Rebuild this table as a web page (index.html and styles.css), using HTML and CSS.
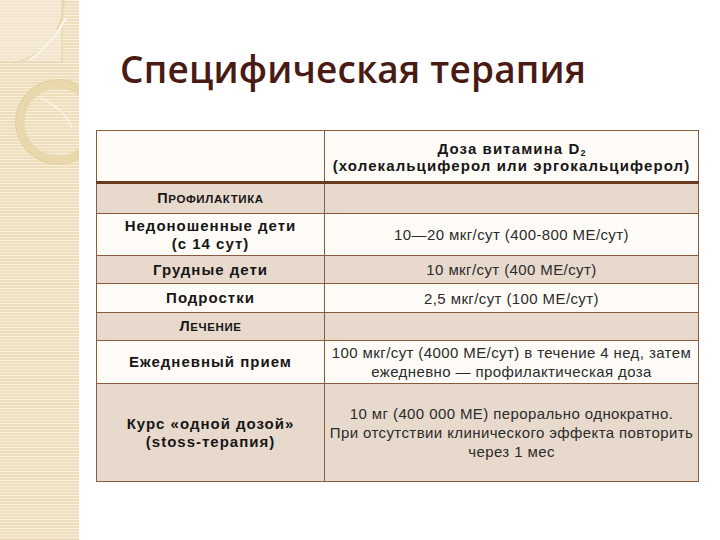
FILE: index.html
```html
<!DOCTYPE html>
<html lang="ru">
<head>
<meta charset="utf-8">
<link rel="stylesheet" href="styles.css">
</head>
<body>
<div class="page">
  <aside class="strip">
    <svg class="deco" width="79" height="540" viewBox="0 0 79 540">
      <rect x="0" y="0" width="62" height="62" fill="#f6ecdc" opacity="0.55"/>
      <path d="M0 62 H62 V0" fill="none" stroke="#e3d2ae" stroke-width="1"/>
      <path d="M64 0 C62 32 48 54 14 63" fill="none" stroke="#e6d6b2" stroke-width="1.5"/>
      <path d="M66 18 C58 34 46 48 30 60" fill="none" stroke="#fbf5e8" stroke-width="2.5"/>
      <circle cx="58" cy="122" r="38" fill="none" stroke="#e8d8ac" stroke-width="9"/>
      <circle cx="58" cy="122" r="42.5" fill="none" stroke="#e0cc9c" stroke-width="0.8"/>
      <path d="M40 98 C55 104 66 114 72 128" fill="none" stroke="#f8f0de" stroke-width="2"/>
    </svg>
  </aside>
  <main class="main">
    <h1 class="title">Специфическая терапия</h1>
    <table class="dose">
      <colgroup>
        <col class="col1">
        <col class="col2">
      </colgroup>
      <tr class="head">
        <td></td>
        <td><div class="h-line">Доза витамина D<sub>2</sub></div><div class="h-line">(холекальциферол или эргокальциферол)</div></td>
      </tr>
      <tr class="shade r-prof">
        <td class="lbl sc"><span class="big">П</span>РОФИЛАКТИКА</td>
        <td></td>
      </tr>
      <tr class="r-ned">
        <td class="lbl">Недоношенные дети<br>(с 14 сут)</td>
        <td class="val">10—20 мкг/сут (400-800 МЕ/сут)</td>
      </tr>
      <tr class="shade r-gr">
        <td class="lbl">Грудные дети</td>
        <td class="val">10 мкг/сут (400 МЕ/сут)</td>
      </tr>
      <tr class="r-pod">
        <td class="lbl">Подростки</td>
        <td class="val">2,5 мкг/сут (100 МЕ/сут)</td>
      </tr>
      <tr class="shade r-lech">
        <td class="lbl sc"><span class="big">Л</span>ЕЧЕНИЕ</td>
        <td></td>
      </tr>
      <tr class="r-ezh">
        <td class="lbl">Ежедневный прием</td>
        <td class="val">100 мкг/сут (4000 МЕ/сут) в течение 4 нед, затем<br>ежедневно — профилактическая доза</td>
      </tr>
      <tr class="shade r-kurs">
        <td class="lbl">Курс «одной дозой»<br>(stoss-терапия)</td>
        <td class="val">10 мг (400 000 МЕ) перорально однократно.<br>При отсутствии клинического эффекта повторить<br>через 1 мес</td>
      </tr>
    </table>
  </main>
</div>
</body>
</html>
```

FILE: styles.css
```css
html, body {
  margin: 0;
  padding: 0;
  background: #ffffff;
}
.page {
  display: flex;
  width: 720px;
  height: 540px;
  overflow: hidden;
}
.strip {
  position: relative;
  flex: 0 0 79px;
  height: 540px;
  background-color: #f2e5c6;
  background-image: repeating-linear-gradient(to bottom, #f7eedb 0px, #f7eedb 1px, #eedfbc 1px, #eedfbc 3px);
}
.deco {
  position: absolute;
  left: 0;
  top: 0;
}
.main {
  flex: 1;
  padding-left: 17px;
}
.title {
  margin: 44px 0 0 24px;
  height: 86px;
  font-family: "Open Sans", sans-serif;
  font-weight: 600;
  font-size: 37px;
  line-height: 50px;
  color: #4a1b15;
  letter-spacing: 0.2px;
}
.dose {
  border-collapse: collapse;
  table-layout: fixed;
  width: 602px;
  font-family: "Liberation Sans", Arial, sans-serif;
  font-size: 15px;
  color: #161616;
  border: 1px solid #8a5c3e;
}
.col1 { width: 228px; }
.col2 { width: 374px; }
.dose td {
  border: 1px solid #8a5c3e;
  padding: 0;
  text-align: center;
  vertical-align: middle;
  background: #fffcf8;
  white-space: nowrap;
}
.dose .lbl {
  font-weight: bold;
  line-height: 18px;
  letter-spacing: 1px;
}
.dose .head td {
  height: 49px;
  border-bottom: 3px solid #6b3b1f;
  font-weight: bold;
  letter-spacing: 1.1px;
  padding-top: 1px;
}
.h-line {
  height: 17px;
  line-height: 17px;
}
.dose sub {
  font-size: 9px;
  letter-spacing: 0;
  vertical-align: 0;
  position: relative;
  top: 2px;
  line-height: 0;
}
.dose .shade td {
  background: #e8d9cd;
}
.dose .val {
  color: #2b2b2b;
  line-height: 19px;
  letter-spacing: 0.4px;
}
.dose .sc {
  font-size: 11.5px;
  letter-spacing: 0.6px;
}
.dose .sc .big {
  font-size: 14.5px;
}
.r-prof td { height: 29px; }
.r-ned td { height: 41px; }
.r-gr td { height: 27px; }
.r-pod td { height: 28px; }
.r-lech td { height: 27px; }
.r-ezh td { height: 42px; }
.r-kurs td { height: 97px; }
```
